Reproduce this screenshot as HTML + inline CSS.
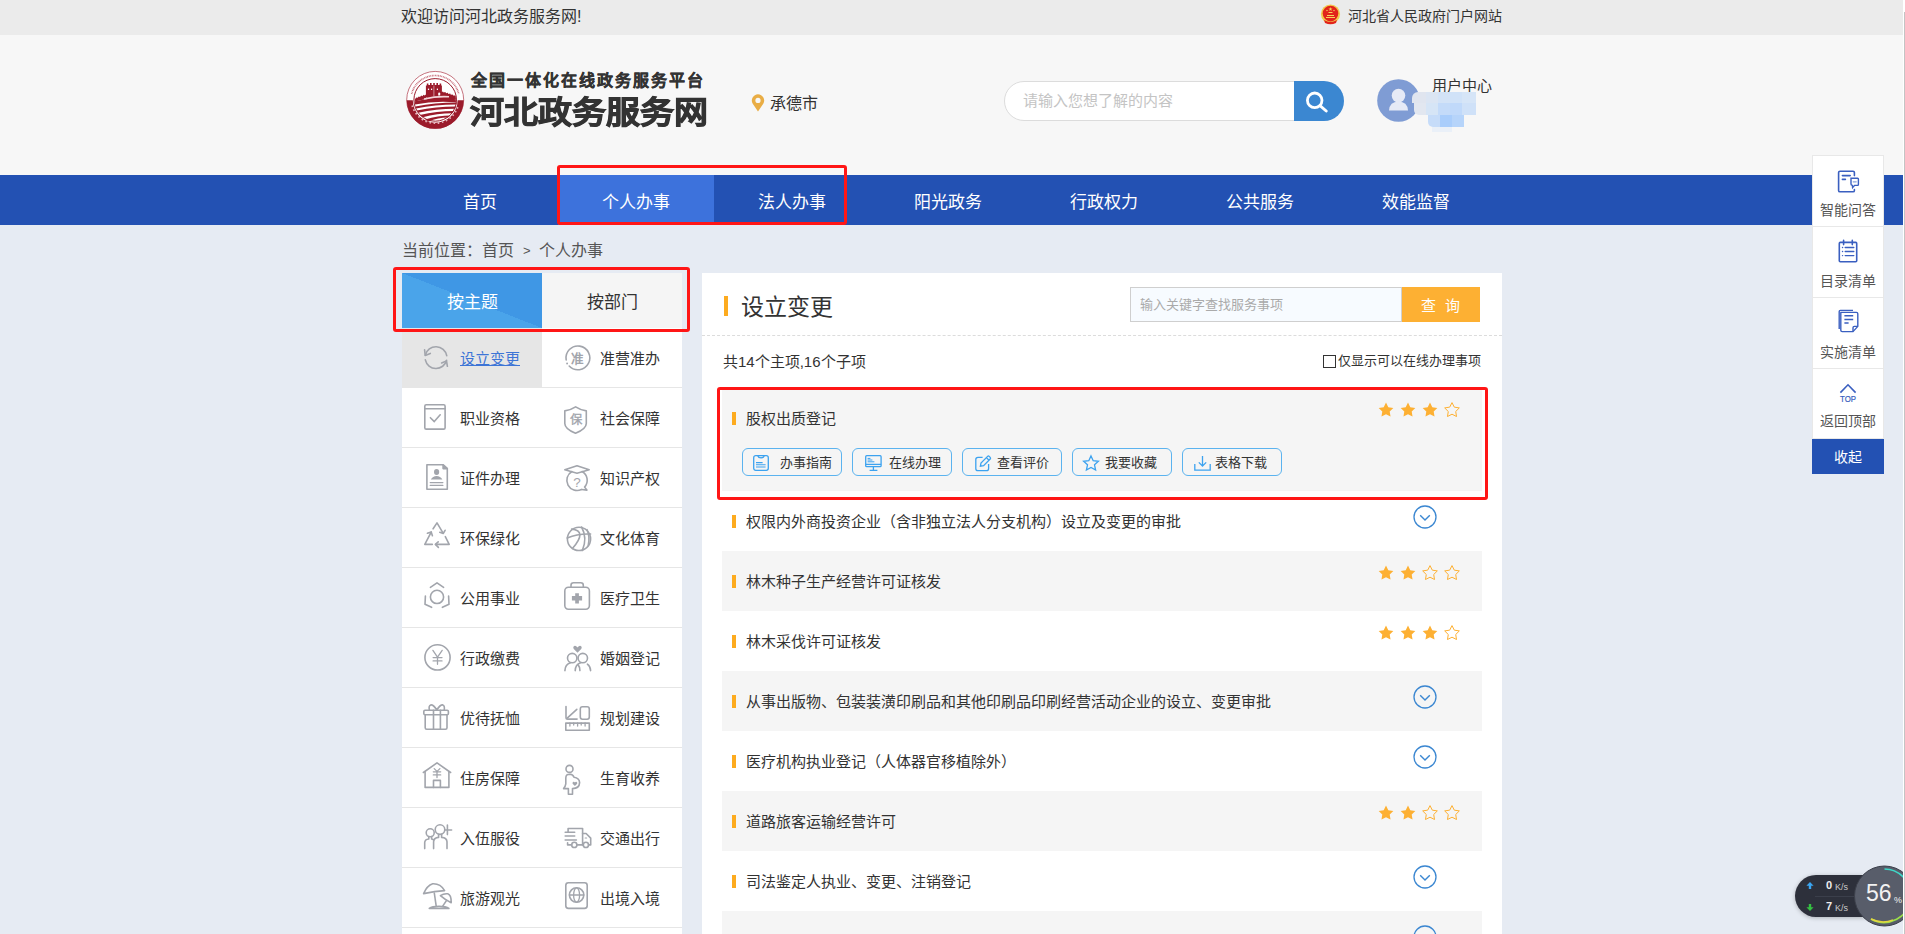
<!DOCTYPE html>
<html lang="zh-CN">
<head>
<meta charset="utf-8">
<style>
*{margin:0;padding:0;box-sizing:border-box}
html,body{width:1905px;height:934px;overflow:hidden}
body{position:relative;background:#e6ebf3;font-family:"Liberation Sans",sans-serif;color:#333}
.a{position:absolute;white-space:nowrap}
#topbar{left:0;top:0;width:1903px;height:35px;background:#ebebeb}
#header{left:0;top:35px;width:1903px;height:140px;background:#f7f7f7}
#nav{left:0;top:175px;width:1903px;height:50px;background:#2351b3}
.nv{top:0;height:50px;width:156px;text-align:center;color:#fff;font-size:17px;line-height:55px}
.redbox{border:3px solid #ff1616;border-radius:3px}
#sb{left:1903px;top:0;width:2px;height:934px;background:#fff}
#sb i{position:absolute;left:1px;top:12px;width:1px;height:922px;background:#c4c4c4}
.tab{width:140px;height:55px;line-height:60px;text-align:center;font-size:17px}
.mi{font-size:15px;line-height:61px;color:#333}
.mi.act{color:#3d75d6;text-decoration:underline;text-underline-offset:1px;text-decoration-thickness:1px}
.ic{fill:none;stroke:#a2a5ac;stroke-width:1.6;overflow:visible;stroke-linecap:round;stroke-linejoin:round}
.bi{fill:none;stroke:#3ca2ef;stroke-width:1.3;overflow:visible}
.li{font-size:15px;line-height:22px;color:#333}
.bt{font-size:13px;line-height:22px;color:#333}
.sd{left:1812px;width:72px;text-align:center;font-size:14px;line-height:22px;color:#555}
</style>
</head>
<body>
<div id="topbar" class="a"></div>
<div class="a" style="left:401px;top:0;font-size:16px;line-height:34px;color:#333">欢迎访问河北政务服务网!</div>
<div class="a" style="left:1348px;top:0;font-size:14px;line-height:33px;color:#333">河北省人民政府门户网站</div>

<div id="header" class="a"></div>
<div class="a" style="left:471px;top:71px;font-size:16px;line-height:20px;font-weight:bold;letter-spacing:2px;-webkit-text-stroke:0.3px #333;color:#333">全国一体化在线政务服务平台</div>
<div class="a" style="left:470px;top:92px;font-size:34px;line-height:40px;font-weight:900;color:#333;-webkit-text-stroke:1px #333;transform:scaleY(0.9);transform-origin:0 20px">河北政务服务网</div>
<div class="a" style="left:770px;top:93px;font-size:16px;line-height:22px;color:#333">承德市</div>

<div class="a" style="left:1004px;top:81px;width:300px;height:40px;border:1px solid #dcdcdc;border-radius:20px 0 0 20px;background:#fff"></div>
<div class="a" style="left:1023px;top:90px;font-size:15px;line-height:22px;color:#c4c4c4">请输入您想了解的内容</div>
<div class="a" style="left:1294px;top:81px;width:50px;height:40px;border-radius:0 20px 20px 0;background:#3b87d1"></div>

<div class="a" style="left:1432px;top:76px;font-size:15px;line-height:20px;color:#333">用户中心</div>


<!-- header icons -->
<svg class="a" style="left:1319px;top:3px" width="23" height="23" viewBox="0 0 23 23">
<circle cx="11.5" cy="11" r="9.6" fill="#f2c94c"/>
<circle cx="11.5" cy="10.6" r="7.8" fill="#e2231a"/>
<path d="M5 17 Q11.5 21 18 17 L17 20 Q11.5 22.5 6 20 Z" fill="#e2231a"/>
<path d="M7 14.5 H16 M8 12.5 H15 M9.5 9.5 H13.5" stroke="#f6d35b" stroke-width="1.2"/>
<path d="M11.5 4 L12 5.6 L13.6 5.6 L12.3 6.5 L12.8 8 L11.5 7.1 L10.2 8 L10.7 6.5 L9.4 5.6 L11 5.6 Z" fill="#f6d35b"/>
<circle cx="8" cy="7.5" r="0.7" fill="#f6d35b"/><circle cx="15" cy="7.5" r="0.7" fill="#f6d35b"/>
</svg>
<svg class="a" style="left:404px;top:70px" width="62" height="60" viewBox="0 0 62 60">
<circle cx="31.2" cy="29.9" r="28.5" fill="#fff" stroke="#b8505e" stroke-width="0.8"/>
<path d="M2.7 30.3 A28.5 28.5 0 0 0 59.7 30.3 L53.6 30.3 A22.4 22.4 0 0 1 8.8 30.3 Z" fill="#9b1b2b"/>
<circle cx="31.2" cy="29.9" r="21.3" fill="none" stroke="#9b1b2b" stroke-width="1"/>
<path d="M7.6 24 A24.3 24.3 0 0 1 54.8 24" fill="none" stroke="#c8707c" stroke-width="1.7" stroke-dasharray="0.9 0.7"/>
<path d="M8.2 35.5 A23.8 23.8 0 0 0 54.2 35.5" fill="none" stroke="#e6b4bb" stroke-width="1.8" stroke-dasharray="1.6 2.6"/>
<path d="M21.9 27.6 V15.6 H22.8 V13.4 H24.4 V15 H26 V13 H27.6 V15 H29.2 V12.9 H30.8 V15 H32.4 V13 H34 V15 H35.6 V13.4 H37.2 V15.6 H37.9 V22 L39 21.4 L39.6 22.6 L41.4 22 L42 23.2 L43.8 22.8 L44.4 24 L46.2 23.6 L46.8 24.8 L48.6 24.4 L49.2 25.6 L51.6 25.4 L52 29.6 Q40 28 31 30.4 Z" fill="#9b1b2b"/>
<path d="M22 24.4 L20.6 25.6 L19.6 24.8 L18.4 26.2 L17.2 25.6 L16 27 L14.8 26.4 L13.6 27.8 L12.4 27.4 L10.8 29.2 V31.6 L22 29 Z" fill="#9b1b2b"/>
<path d="M10.8 31.2 Q30 26.8 51.8 29.2 L52 32.2 Q30 30.4 11 34.6 Z" fill="#9b1b2b"/>
<path d="M20 29 Q33 26 45 26.8" fill="none" stroke="#f3d6da" stroke-width="1.6"/>
<rect x="23.9" y="18.6" width="1.2" height="1.4" fill="#fff"/><rect x="27" y="18.6" width="1.2" height="1.4" fill="#fff"/><rect x="32.8" y="18.6" width="1.2" height="1.4" fill="#fff"/>
<path d="M29.9 15.6 V26" stroke="#fff" stroke-width="0.5"/>
<path d="M34.2 25.6 V23.4 A1 1 0 0 1 36.2 23.4 V25.6 Z" fill="#fff"/>
<path d="M11.4 36.4 Q31 32.4 52.6 32.4 L52.4 34.4 Q31 34.4 12 38.4 Z" fill="#9b1b2b"/>
<path d="M12.8 40.6 Q32 36.6 51.8 36.6 L51.2 38.8 Q32 38.8 14.2 42.8 Z" fill="#9b1b2b"/>
<path d="M15.8 45 Q33 41 49.8 41 L48.4 43.2 Q33 43.2 18.8 47.2 Z" fill="#9b1b2b"/>
<path d="M21 49.4 Q34 45.4 46.6 45.4 L44 47.4 Q34 47.4 24.4 51.4 Z" fill="#9b1b2b"/>
</svg>
<svg class="a" style="left:750px;top:93px" width="16" height="20" viewBox="0 0 16 20">
<path d="M8 18.5 L2.6 10.6 A6.2 6.2 0 1 1 13.4 10.6 Z" fill="#e9ad45"/>
<circle cx="8" cy="7.4" r="2.6" fill="#f7f7f7"/>
</svg>
<svg class="a" style="left:1302px;top:89px" width="26" height="26" viewBox="0 0 26 26">
<circle cx="12.7" cy="11.3" r="7.3" fill="none" stroke="#fff" stroke-width="2.8"/>
<path d="M18 16.6 L24.2 22" stroke="#fff" stroke-width="2.9" stroke-linecap="round"/>
</svg>
<svg class="a" style="left:1377px;top:79px" width="43" height="43" viewBox="0 0 43 43">
<circle cx="21.5" cy="21.5" r="21.3" fill="#7f9cd4"/>
<circle cx="21.5" cy="16.6" r="6.8" fill="#e6eaf6"/>
<path d="M12 31.5 Q12.6 22.8 21.5 22.6 Q30.4 22.8 31 31.5 Z" fill="#e6eaf6"/>
</svg>
<div class="a" style="left:1410px;top:90px;width:70px;height:44px;filter:blur(0.7px)">
<div class="a" style="left:2px;top:2px;width:14px;height:11px;background:#e0e5ef;border-radius:6px 0 0 0"></div>
<div class="a" style="left:16px;top:2px;width:12px;height:11px;background:#dbe5f3"></div>
<div class="a" style="left:28px;top:2px;width:12px;height:11px;background:#d3e3f7"></div>
<div class="a" style="left:40px;top:2px;width:12px;height:11px;background:#d0e2f8"></div>
<div class="a" style="left:52px;top:2px;width:14px;height:11px;background:#d6e5f7"></div>
<div class="a" style="left:4px;top:13px;width:12px;height:12px;background:#e2e7f0;border-radius:0 0 0 5px"></div>
<div class="a" style="left:16px;top:13px;width:12px;height:12px;background:#d6e5f6"></div>
<div class="a" style="left:28px;top:13px;width:12px;height:12px;background:#c4dbf9"></div>
<div class="a" style="left:40px;top:13px;width:12px;height:12px;background:#c0d9fa"></div>
<div class="a" style="left:52px;top:13px;width:14px;height:12px;background:#cfe1f8"></div>
<div class="a" style="left:18px;top:25px;width:12px;height:12px;background:#c6dcf9;border-radius:0 0 0 5px"></div>
<div class="a" style="left:30px;top:25px;width:12px;height:12px;background:#a9cdfb"></div>
<div class="a" style="left:42px;top:25px;width:12px;height:12px;background:#b6d4fa"></div>
<div class="a" style="left:22px;top:37px;width:20px;height:5px;background:#eaf0f8"></div>
</div>
<div id="nav" class="a">
  <div class="a nv" style="left:402px">首页</div>
  <div class="a nv" style="left:558px;background:#3d72dc">个人办事</div>
  <div class="a nv" style="left:714px">法人办事</div>
  <div class="a nv" style="left:870px">阳光政务</div>
  <div class="a nv" style="left:1026px">行政权力</div>
  <div class="a nv" style="left:1182px">公共服务</div>
  <div class="a nv" style="left:1338px">效能监督</div>
</div>
<div class="a redbox" style="left:557px;top:165px;width:290px;height:60px"></div>

<div class="a" style="left:402px;top:240px;font-size:16px;line-height:22px;color:#555">当前位置：首页</div>
<div class="a" style="left:523px;top:240px;font-size:13px;line-height:22px;color:#555">&gt;</div>
<div class="a" style="left:539px;top:240px;font-size:16px;line-height:22px;color:#555">个人办事</div>


<!-- left panel -->
<div class="a" style="left:402px;top:273px;width:140px;height:55px;background:linear-gradient(to top right,#4aa4ea 50%,#3f97e5 50%)"></div>
<div class="a" style="left:542px;top:273px;width:140px;height:55px;background:#f5f5f5"></div>
<div class="a tab" style="left:402px;top:273px;color:#fff">按主题</div>
<div class="a tab" style="left:542px;top:273px;color:#333">按部门</div>
<div class="a" style="left:402px;top:328px;width:280px;height:606px;background:#fff"></div>
<div class="a" style="left:402px;top:328px;width:140px;height:59px;background:#e6e6e6"></div>
<div class="a" style="left:402px;top:387px;width:280px;height:1px;background:#e6e6e6"></div>
<div class="a" style="left:402px;top:447px;width:280px;height:1px;background:#e6e6e6"></div>
<div class="a" style="left:402px;top:507px;width:280px;height:1px;background:#e6e6e6"></div>
<div class="a" style="left:402px;top:567px;width:280px;height:1px;background:#e6e6e6"></div>
<div class="a" style="left:402px;top:627px;width:280px;height:1px;background:#e6e6e6"></div>
<div class="a" style="left:402px;top:687px;width:280px;height:1px;background:#e6e6e6"></div>
<div class="a" style="left:402px;top:747px;width:280px;height:1px;background:#e6e6e6"></div>
<div class="a" style="left:402px;top:807px;width:280px;height:1px;background:#e6e6e6"></div>
<div class="a" style="left:402px;top:867px;width:280px;height:1px;background:#e6e6e6"></div>
<div class="a" style="left:402px;top:927px;width:280px;height:1px;background:#e6e6e6"></div>
<div class="a mi act" style="left:460px;top:328px">设立变更</div>
<div class="a mi" style="left:600px;top:328px">准营准办</div>
<svg class="a ic" style="left:422px;top:344px" width="28" height="28" viewBox="-2 -2 28 28"><path d="M1.38 9.15 A10.90 10.90 0 0 1 22.73 9.71"/><path d="M0.6 3.8 L1.2 9.4 L6.3 7.4"/><path d="M22.58 14.24 A10.90 10.90 0 0 1 1.34 13.87"/><path d="M17.6 16.9 L22.5 15 L23.4 20.3"/></svg>
<svg class="a ic" style="left:563px;top:343px" width="30" height="30" viewBox="-2 -2 30 30"><path d="M1.18 14.97 A11.90 11.90 0 1 1 4.20 21.02"/><circle cx="2.1" cy="18.5" r="0.95" fill="#a2a5ac" stroke="none"/><text x="12.9" y="17.8" font-size="12.6" font-weight="bold" text-anchor="middle" fill="#a2a5ac" stroke="none">准</text></svg>
<div class="a mi" style="left:460px;top:388px">职业资格</div>
<div class="a mi" style="left:600px;top:388px">社会保障</div>
<svg class="a ic" style="left:422px;top:402px" width="26" height="30" viewBox="-2 -2 26 30"><rect x="0.8" y="0.8" width="20.3" height="24.3" rx="1.4"/><path d="M0.8 4.7 H21.1"/><path d="M6.4 13.7 L10.3 17.6 L16.2 10.8"/></svg>
<svg class="a ic" style="left:562px;top:404px" width="27" height="32" viewBox="-2 -2 27 32"><path d="M11.6 0.8 Q7 3.8 0.8 4.9 V17.4 Q0.8 22.8 11.5 27.2 Q22.3 22.8 22.3 17.4 V4.9 Q16.2 3.8 11.6 0.8 Z"/><text x="11.7" y="18.4" font-size="12.4" text-anchor="middle" fill="#a2a5ac" stroke="#a2a5ac" stroke-width="0.35">保</text></svg>
<div class="a mi" style="left:460px;top:448px">证件办理</div>
<div class="a mi" style="left:600px;top:448px">知识产权</div>
<svg class="a ic" style="left:424px;top:462px" width="26" height="30" viewBox="-2 -2 26 30"><path d="M0.9 0.8 H17.1 L21.3 4.6 V25.3 H0.9 Z"/><path d="M17.1 0.8 V4.6 H21.3 Z" fill="#a2a5ac"/><ellipse cx="10.6" cy="8" rx="2.6" ry="3" fill="#a2a5ac" stroke="none"/><path d="M4.8 15.6 Q6.8 12.2 10.6 12 Q14.4 12.2 16.4 15.6 Z" fill="#a2a5ac" stroke="none"/><path d="M4.2 18.6 H16.9 M4.2 21.4 H16.9" stroke-width="1.2"/></svg>
<svg class="a ic" style="left:562px;top:463px" width="30" height="31" viewBox="-2 -2 30 31"><path d="M0.8 4.8 L13 0.7 L25.2 4.8 L13 8.2 Z"/><path d="M18.10 6.47 A10.20 10.20 0 0 1 20.58 22.13 L22.9 25.1 L17.6 24.5"/><path d="M17.47 24.47 A10.20 10.20 0 0 1 7.90 6.47"/><text x="13.1" y="21.6" font-size="13.5" text-anchor="middle" fill="#a2a5ac" stroke="none">?</text></svg>
<div class="a mi" style="left:460px;top:508px">环保绿化</div>
<div class="a mi" style="left:600px;top:508px">文化体育</div>
<svg class="a ic" style="left:422px;top:520px" width="30" height="30" viewBox="-2 -2 30 30"><path d="M9.1 6.8 L13 0.9 L19.1 11.2"/><path d="M15.8 10.3 L19.2 11.5 L21.1 8.3"/><path d="M21.3 14.6 L25.2 22.4 H11.6"/><path d="M14.2 19.8 L11.4 22.4 L14.4 25.4"/><path d="M8.3 22.4 H0.8 L7.2 10.1"/><path d="M3.4 11.2 L7.2 9.9 L8.4 13.7"/></svg>
<svg class="a ic" style="left:564px;top:524px" width="30" height="30" viewBox="-2 -2 30 30"><circle cx="13" cy="12.9" r="11.6"/><path d="M1.2 12 Q12 7.4 24.6 8"/><path d="M5.6 3.1 Q21.8 4.6 6.4 22.6"/><path d="M15.6 1 Q21.6 12 16.4 24.4"/><path d="M21 3.6 Q24.2 10 22.2 19.6"/></svg>
<div class="a mi" style="left:460px;top:568px">公用事业</div>
<div class="a mi" style="left:600px;top:568px">医疗卫生</div>
<svg class="a ic" style="left:422px;top:580px" width="30" height="30" viewBox="-2 -2 30 30"><path d="M6.4 5.3 L13 0.8 L19.6 5.3"/><circle cx="13" cy="14.9" r="6.6"/><path d="M1.4 14.1 L1 22.2 L7.6 25.3"/><path d="M24.6 14.1 L25 22.2 L18.4 25.3"/></svg>
<svg class="a ic" style="left:562px;top:580px" width="30" height="32" viewBox="-2 -2 30 32"><rect x="0.8" y="5.3" width="24.6" height="21.9" rx="3.6"/><path d="M7 5.3 V3.3 Q7 0.8 9.5 0.8 H16.8 Q19.3 0.8 19.3 3.3 V5.3"/><path d="M11.2 11.2 H14.9 V14.1 H18.1 V18.6 H14.9 V21.6 H11.2 V18.6 H7.9 V14.1 H11.2 Z" fill="#a2a5ac" stroke="none"/></svg>
<div class="a mi" style="left:460px;top:628px">行政缴费</div>
<div class="a mi" style="left:600px;top:628px">婚姻登记</div>
<svg class="a ic" style="left:422px;top:642px" width="31" height="31" viewBox="-2 -2 31 31"><circle cx="13.5" cy="13.4" r="12.6"/><path d="M8.9 6.4 L13.5 13.2 L18.2 6.4 M13.5 13.2 V20.3 M9.1 13.6 H18 M9.1 16.9 H18" stroke-width="1.3"/></svg>
<svg class="a ic" style="left:562px;top:643px" width="31" height="30" viewBox="-2 -2 31 30"><path d="M13.5 7.8 L9.8 4 Q8.8 2.6 9.6 1.5 Q10.6 0.4 11.8 1 Q13 1.6 13.5 2.6 Q14 1.6 15.2 1 Q16.4 0.4 17.4 1.5 Q18.2 2.6 17.2 4 Z" fill="#a2a5ac" stroke="none"/><circle cx="8.2" cy="13.1" r="4.7"/><circle cx="18.8" cy="13.1" r="4.7"/><path d="M0.9 25.6 Q1.2 19.4 6.4 17.8"/><path d="M11.2 25.6 Q11.4 19.6 16.6 17.8"/><path d="M14 19.6 Q15.8 21.6 15.9 25.6"/><path d="M23.4 19.2 Q26.4 21.4 26.6 25.6"/></svg>
<div class="a mi" style="left:460px;top:688px">优待抚恤</div>
<div class="a mi" style="left:600px;top:688px">规划建设</div>
<svg class="a ic" style="left:421px;top:702px" width="30" height="30" viewBox="-2 -2 30 30"><rect x="0.8" y="6.2" width="24.6" height="4.6" rx="1.2"/><path d="M2.2 10.8 V23.8 Q2.2 25.3 3.7 25.3 H22.5 Q24 25.3 24 23.8 V10.8"/><path d="M10.5 6.2 V25.3 M17.4 6.2 V25.3"/><path d="M13.8 6 Q10.4 0.6 7.8 0.9 Q5.4 1.6 6.4 6.2 M13.8 6 Q17.2 0.6 19.8 0.9 Q22 1.6 21.2 6.2"/></svg>
<svg class="a ic" style="left:563px;top:704px" width="29" height="29" viewBox="-2 -2 29 29"><path d="M1 0.6 V11.4 Q1 13.1 2.7 13.1 H12.1"/><path d="M2.2 12.1 L11.8 3.4"/><rect x="15.3" y="0.7" width="9" height="12.5" rx="2.2"/><rect x="0.8" y="17.1" width="23.5" height="7.1"/><path d="M4.9 17 V20 M8.7 17 V19 M12.6 17 V20 M16.2 17 V19 M20.1 17 V20" stroke-width="1.3"/></svg>
<div class="a mi" style="left:460px;top:748px">住房保障</div>
<div class="a mi" style="left:600px;top:748px">生育收养</div>
<svg class="a ic" style="left:421px;top:760px" width="32" height="30" viewBox="-2 -2 32 30"><path d="M0.4 10.5 L14 0.8 L27.6 10.5"/><path d="M2.1 9.6 V25.4 H25.9 V9.6"/><path d="M10.5 25.4 V18.4 H17.4 V25.4"/><path d="M11.2 6.6 L14 9.4 L16.9 6.6 M14 9.4 V15.6 M10.3 9.8 H17.7 M10.3 12.9 H17.7" stroke-width="1.3"/></svg>
<svg class="a ic" style="left:561px;top:763px" width="22" height="34" viewBox="-2 -2 22 34"><circle cx="6.5" cy="3.9" r="3.5"/><path d="M4 9.8 Q2.8 10.6 2.8 13 V18.8 Q2.4 21.4 0.6 23.6 H5.4 V29.2 H9.5 V23.6 Q16.4 23.4 16.6 17.6 Q16.4 12.8 11 12.2 Q10 9.4 7.2 9.2 Q5.2 9.2 4 9.8 Z"/><path d="M11.9 21 L9.6 18.7 Q9.2 17.2 10.4 16.8 Q11.4 16.6 11.9 17.6 Q12.4 16.6 13.4 16.8 Q14.6 17.2 14.2 18.7 Z" fill="#a2a5ac" stroke="none"/></svg>
<div class="a mi" style="left:460px;top:808px">入伍服役</div>
<div class="a mi" style="left:600px;top:808px">交通出行</div>
<svg class="a ic" style="left:422px;top:822px" width="32" height="29" viewBox="-2 -2 32 29"><circle cx="6.2" cy="8.8" r="4"/><path d="M0.7 24.6 V18.6 Q0.8 15.4 4.8 15 V12.6 M7.6 12.6 V15 Q8.4 15.2 9.4 15.8"/><circle cx="16" cy="5.6" r="4.8"/><path d="M9.6 24.6 V17.8 Q9.8 13.8 14.6 13.4 V10.4 M17.6 10.4 V13.4 Q22.8 13.8 23 17.8 V24.6"/><path d="M23.4 1.1 V10.6 M21 6 H27.6"/></svg>
<svg class="a ic" style="left:563px;top:825px" width="30" height="25" viewBox="-2 -2 30 25"><path d="M3.1 5 V1.5 H17.6 V17.9"/><path d="M0.2 5.3 H9.7 M0.2 9 H9.7 M0.2 13 H11.4"/><path d="M17.6 6.5 H21.1 L25.7 11.1 V17.9 H23.6"/><path d="M2.6 15.8 V17.9 H6.6 M11.9 17.9 H18.3"/><circle cx="9.3" cy="17.9" r="2.6"/><circle cx="20.9" cy="17.9" r="2.6"/><path d="M20.2 11 H21.6" stroke-width="1.2"/></svg>
<div class="a mi" style="left:460px;top:868px">旅游观光</div>
<div class="a mi" style="left:600px;top:868px">出境入境</div>
<svg class="a ic" style="left:421px;top:881px" width="33" height="30" viewBox="-2 -2 33 30"><path d="M0.6 10.6 Q4 2.6 9.7 0.8 Q17.4 0.4 21.6 7.6 Q12 8.2 0.6 10.6 Z"/><path d="M11.3 10 L13.2 23.1"/><path d="M17.4 12.7 Q21 10.2 24.8 10.8 Q28.4 12 28.2 19.7 Q22 16.8 17.4 12.7 Z"/><path d="M23.6 17.4 L19.7 23.1"/><path d="M6.3 25.4 Q9 23.2 16 23.2 Q23 23.2 25.9 25.4 Z"/></svg>
<svg class="a ic" style="left:563px;top:880px" width="27" height="31" viewBox="-2 -2 27 31"><rect x="0.8" y="0.8" width="21.4" height="25.6" rx="2.6"/><circle cx="11.6" cy="13" r="7.2"/><path d="M4.4 13 H18.8" stroke-width="1.3"/><ellipse cx="11.6" cy="13" rx="3" ry="7.2" stroke-width="1.3"/></svg>
<div class="a redbox" style="left:393px;top:267px;width:297px;height:65px"></div>

<!-- content -->
<div class="a" style="left:702px;top:273px;width:800px;height:661px;background:#fff"></div>
<div class="a" style="left:724px;top:296px;width:4px;height:20px;background:#fdab1f"></div>
<div class="a" style="left:741px;top:290px;font-size:23px;line-height:34px;color:#333">设立变更</div>
<div class="a" style="left:1130px;top:287px;width:272px;height:35px;border:1px solid #cfcfcf;background:#f7fbff"></div>
<div class="a" style="left:1140px;top:294px;font-size:13px;line-height:22px;color:#aaa">输入关键字查找服务事项</div>
<div class="a" style="left:1402px;top:287px;width:78px;height:35px;background:#fdb033"></div>
<div class="a" style="left:1421px;top:295px;font-size:15px;line-height:22px;color:#fff;letter-spacing:9px">查询</div>
<div class="a" style="left:702px;top:335px;width:800px;height:0;border-top:1px dashed #dcdcdc"></div>
<div class="a" style="left:723px;top:351px;font-size:15px;line-height:22px;color:#333">共14个主项,16个子项</div>
<div class="a" style="left:1323px;top:355px;width:13px;height:13px;border:1px solid #333;background:#fff"></div>
<div class="a" style="left:1338px;top:350px;font-size:13px;line-height:22px;color:#333">仅显示可以在线办理事项</div>
<div class="a" style="left:722px;top:388px;width:760px;height:103px;background:#f5f5f5"></div>
<div class="a" style="left:732px;top:412px;width:4px;height:13px;background:#fdab1f"></div>
<div class="a li" style="left:746px;top:408px">股权出质登记</div>
<svg class="a" style="left:1378px;top:402px" width="16" height="16" viewBox="0 0 16 16"><polygon points="8.00,0.60 10.29,5.14 15.32,5.92 11.71,9.51 12.53,14.53 8.00,12.20 3.47,14.53 4.29,9.51 0.68,5.92 5.71,5.14" fill="#fdb033"/></svg>
<svg class="a" style="left:1400px;top:402px" width="16" height="16" viewBox="0 0 16 16"><polygon points="8.00,0.60 10.29,5.14 15.32,5.92 11.71,9.51 12.53,14.53 8.00,12.20 3.47,14.53 4.29,9.51 0.68,5.92 5.71,5.14" fill="#fdb033"/></svg>
<svg class="a" style="left:1422px;top:402px" width="16" height="16" viewBox="0 0 16 16"><polygon points="8.00,0.60 10.29,5.14 15.32,5.92 11.71,9.51 12.53,14.53 8.00,12.20 3.47,14.53 4.29,9.51 0.68,5.92 5.71,5.14" fill="#fdb033"/></svg>
<svg class="a" style="left:1444px;top:402px" width="16" height="16" viewBox="0 0 16 16"><polygon points="8.00,0.60 10.29,5.14 15.32,5.92 11.71,9.51 12.53,14.53 8.00,12.20 3.47,14.53 4.29,9.51 0.68,5.92 5.71,5.14" fill="none" stroke="#fdb033" stroke-width="1"/></svg>
<div class="a" style="left:722px;top:491px;width:760px;height:60px;background:#fff"></div>
<div class="a" style="left:732px;top:515px;width:4px;height:13px;background:#fdab1f"></div>
<div class="a li" style="left:746px;top:511px">权限内外商投资企业（含非独立法人分支机构）设立及变更的审批</div>
<svg class="a" style="left:1412px;top:504px" width="26" height="26" viewBox="0 0 26 26"><circle cx="13" cy="13" r="11" fill="none" stroke="#3b87d1" stroke-width="1.3"/><path d="M8.2 11.2 L13 16 L17.8 11.2" fill="none" stroke="#3b87d1" stroke-width="1.4"/></svg>
<div class="a" style="left:722px;top:551px;width:760px;height:60px;background:#f5f5f5"></div>
<div class="a" style="left:732px;top:575px;width:4px;height:13px;background:#fdab1f"></div>
<div class="a li" style="left:746px;top:571px">林木种子生产经营许可证核发</div>
<svg class="a" style="left:1378px;top:565px" width="16" height="16" viewBox="0 0 16 16"><polygon points="8.00,0.60 10.29,5.14 15.32,5.92 11.71,9.51 12.53,14.53 8.00,12.20 3.47,14.53 4.29,9.51 0.68,5.92 5.71,5.14" fill="#fdb033"/></svg>
<svg class="a" style="left:1400px;top:565px" width="16" height="16" viewBox="0 0 16 16"><polygon points="8.00,0.60 10.29,5.14 15.32,5.92 11.71,9.51 12.53,14.53 8.00,12.20 3.47,14.53 4.29,9.51 0.68,5.92 5.71,5.14" fill="#fdb033"/></svg>
<svg class="a" style="left:1422px;top:565px" width="16" height="16" viewBox="0 0 16 16"><polygon points="8.00,0.60 10.29,5.14 15.32,5.92 11.71,9.51 12.53,14.53 8.00,12.20 3.47,14.53 4.29,9.51 0.68,5.92 5.71,5.14" fill="none" stroke="#fdb033" stroke-width="1"/></svg>
<svg class="a" style="left:1444px;top:565px" width="16" height="16" viewBox="0 0 16 16"><polygon points="8.00,0.60 10.29,5.14 15.32,5.92 11.71,9.51 12.53,14.53 8.00,12.20 3.47,14.53 4.29,9.51 0.68,5.92 5.71,5.14" fill="none" stroke="#fdb033" stroke-width="1"/></svg>
<div class="a" style="left:722px;top:611px;width:760px;height:60px;background:#fff"></div>
<div class="a" style="left:732px;top:635px;width:4px;height:13px;background:#fdab1f"></div>
<div class="a li" style="left:746px;top:631px">林木采伐许可证核发</div>
<svg class="a" style="left:1378px;top:625px" width="16" height="16" viewBox="0 0 16 16"><polygon points="8.00,0.60 10.29,5.14 15.32,5.92 11.71,9.51 12.53,14.53 8.00,12.20 3.47,14.53 4.29,9.51 0.68,5.92 5.71,5.14" fill="#fdb033"/></svg>
<svg class="a" style="left:1400px;top:625px" width="16" height="16" viewBox="0 0 16 16"><polygon points="8.00,0.60 10.29,5.14 15.32,5.92 11.71,9.51 12.53,14.53 8.00,12.20 3.47,14.53 4.29,9.51 0.68,5.92 5.71,5.14" fill="#fdb033"/></svg>
<svg class="a" style="left:1422px;top:625px" width="16" height="16" viewBox="0 0 16 16"><polygon points="8.00,0.60 10.29,5.14 15.32,5.92 11.71,9.51 12.53,14.53 8.00,12.20 3.47,14.53 4.29,9.51 0.68,5.92 5.71,5.14" fill="#fdb033"/></svg>
<svg class="a" style="left:1444px;top:625px" width="16" height="16" viewBox="0 0 16 16"><polygon points="8.00,0.60 10.29,5.14 15.32,5.92 11.71,9.51 12.53,14.53 8.00,12.20 3.47,14.53 4.29,9.51 0.68,5.92 5.71,5.14" fill="none" stroke="#fdb033" stroke-width="1"/></svg>
<div class="a" style="left:722px;top:671px;width:760px;height:60px;background:#f5f5f5"></div>
<div class="a" style="left:732px;top:695px;width:4px;height:13px;background:#fdab1f"></div>
<div class="a li" style="left:746px;top:691px">从事出版物、包装装潢印刷品和其他印刷品印刷经营活动企业的设立、变更审批</div>
<svg class="a" style="left:1412px;top:684px" width="26" height="26" viewBox="0 0 26 26"><circle cx="13" cy="13" r="11" fill="none" stroke="#3b87d1" stroke-width="1.3"/><path d="M8.2 11.2 L13 16 L17.8 11.2" fill="none" stroke="#3b87d1" stroke-width="1.4"/></svg>
<div class="a" style="left:722px;top:731px;width:760px;height:60px;background:#fff"></div>
<div class="a" style="left:732px;top:755px;width:4px;height:13px;background:#fdab1f"></div>
<div class="a li" style="left:746px;top:751px">医疗机构执业登记（人体器官移植除外）</div>
<svg class="a" style="left:1412px;top:744px" width="26" height="26" viewBox="0 0 26 26"><circle cx="13" cy="13" r="11" fill="none" stroke="#3b87d1" stroke-width="1.3"/><path d="M8.2 11.2 L13 16 L17.8 11.2" fill="none" stroke="#3b87d1" stroke-width="1.4"/></svg>
<div class="a" style="left:722px;top:791px;width:760px;height:60px;background:#f5f5f5"></div>
<div class="a" style="left:732px;top:815px;width:4px;height:13px;background:#fdab1f"></div>
<div class="a li" style="left:746px;top:811px">道路旅客运输经营许可</div>
<svg class="a" style="left:1378px;top:805px" width="16" height="16" viewBox="0 0 16 16"><polygon points="8.00,0.60 10.29,5.14 15.32,5.92 11.71,9.51 12.53,14.53 8.00,12.20 3.47,14.53 4.29,9.51 0.68,5.92 5.71,5.14" fill="#fdb033"/></svg>
<svg class="a" style="left:1400px;top:805px" width="16" height="16" viewBox="0 0 16 16"><polygon points="8.00,0.60 10.29,5.14 15.32,5.92 11.71,9.51 12.53,14.53 8.00,12.20 3.47,14.53 4.29,9.51 0.68,5.92 5.71,5.14" fill="#fdb033"/></svg>
<svg class="a" style="left:1422px;top:805px" width="16" height="16" viewBox="0 0 16 16"><polygon points="8.00,0.60 10.29,5.14 15.32,5.92 11.71,9.51 12.53,14.53 8.00,12.20 3.47,14.53 4.29,9.51 0.68,5.92 5.71,5.14" fill="none" stroke="#fdb033" stroke-width="1"/></svg>
<svg class="a" style="left:1444px;top:805px" width="16" height="16" viewBox="0 0 16 16"><polygon points="8.00,0.60 10.29,5.14 15.32,5.92 11.71,9.51 12.53,14.53 8.00,12.20 3.47,14.53 4.29,9.51 0.68,5.92 5.71,5.14" fill="none" stroke="#fdb033" stroke-width="1"/></svg>
<div class="a" style="left:722px;top:851px;width:760px;height:60px;background:#fff"></div>
<div class="a" style="left:732px;top:875px;width:4px;height:13px;background:#fdab1f"></div>
<div class="a li" style="left:746px;top:871px">司法鉴定人执业、变更、注销登记</div>
<svg class="a" style="left:1412px;top:864px" width="26" height="26" viewBox="0 0 26 26"><circle cx="13" cy="13" r="11" fill="none" stroke="#3b87d1" stroke-width="1.3"/><path d="M8.2 11.2 L13 16 L17.8 11.2" fill="none" stroke="#3b87d1" stroke-width="1.4"/></svg>
<div class="a" style="left:722px;top:911px;width:760px;height:60px;background:#f5f5f5"></div>
<svg class="a" style="left:1412px;top:924px" width="26" height="26" viewBox="0 0 26 26"><circle cx="13" cy="13" r="11" fill="none" stroke="#3b87d1" stroke-width="1.3"/><path d="M8.2 11.2 L13 16 L17.8 11.2" fill="none" stroke="#3b87d1" stroke-width="1.4"/></svg>
<div class="a" style="left:742px;top:448px;width:100px;height:28px;border:1px solid #5bb3ef;border-radius:6px"></div>
<svg class="a bi" style="left:751px;top:453px" width="20" height="20" viewBox="-2 -2 20 20"><rect x="0.7" y="0.7" width="14.6" height="14.6" rx="2"/><path d="M4.8 0.7 Q5.4 2.8 8 2.8 Q10.6 2.8 11.2 0.7"/><path d="M3 7.6 H9.6 M3 9.8 H12.6 M3 12 H12.6" stroke-width="1.1"/></svg>
<div class="a bt" style="left:780px;top:452px">办事指南</div>
<div class="a" style="left:852px;top:448px;width:100px;height:28px;border:1px solid #5bb3ef;border-radius:6px"></div>
<svg class="a bi" style="left:863px;top:453px" width="20" height="20" viewBox="-2 -2 20 20"><rect x="0.7" y="0.7" width="15.4" height="11" rx="1"/><path d="M0.7 9.4 H16.1"/><path d="M2.6 3.4 H5.4 M2.6 5 H7.4 M2.6 6.8 H9.4" stroke-width="1"/><path d="M8.4 11.7 V15.2 M4.6 15.4 H12.4"/></svg>
<div class="a bt" style="left:889px;top:452px">在线办理</div>
<div class="a" style="left:962px;top:448px;width:100px;height:28px;border:1px solid #5bb3ef;border-radius:6px"></div>
<svg class="a bi" style="left:973px;top:453px" width="20" height="20" viewBox="-2 -2 20 20"><path d="M7.6 2.4 H3 Q0.8 2.4 0.8 4.6 V13.4 Q0.8 15.6 3 15.6 H11.4 Q13.6 15.6 13.6 13.4 V9"/><path d="M5.4 11.2 L6 8 L12.6 1.4 Q13.4 0.6 14.2 1.4 L15.2 2.4 Q16 3.2 15.2 4 L8.6 10.6 Z"/><path d="M11.4 2.6 L14 5.2"/></svg>
<div class="a bt" style="left:997px;top:452px">查看评价</div>
<div class="a" style="left:1072px;top:448px;width:100px;height:28px;border:1px solid #5bb3ef;border-radius:6px"></div>
<svg class="a bi" style="left:1081px;top:453px" width="20" height="20" viewBox="-2 -2 20 20"><path d="M8 0.9 L10.2 5.7 L15.4 6.3 L11.5 9.8 L12.6 15 L8 12.4 L3.4 15 L4.5 9.8 L0.6 6.3 L5.8 5.7 Z"/></svg>
<div class="a bt" style="left:1105px;top:452px">我要收藏</div>
<div class="a" style="left:1182px;top:448px;width:100px;height:28px;border:1px solid #5bb3ef;border-radius:6px"></div>
<svg class="a bi" style="left:1192px;top:453px" width="20" height="20" viewBox="-2 -2 20 20"><path d="M0.8 9 V15.1 H16.2 V9"/><path d="M8.5 0.9 V11 M4.8 7.4 L8.5 11 L12.2 7.4"/></svg>
<div class="a bt" style="left:1215px;top:452px">表格下载</div>
<div class="a redbox" style="left:717px;top:387px;width:771px;height:113px"></div>

<!-- sidebar -->
<div class="a" style="left:1812px;top:155px;width:72px;height:284px;background:#fff;border:1px solid #e8e8e8"></div>
<div class="a" style="left:1812px;top:226px;width:72px;height:1px;background:#e8e8e8"></div>
<div class="a" style="left:1812px;top:297px;width:72px;height:1px;background:#e8e8e8"></div>
<div class="a" style="left:1812px;top:368px;width:72px;height:1px;background:#e8e8e8"></div>
<div class="a sd" style="top:199px">智能问答</div>
<div class="a sd" style="top:270px">目录清单</div>
<div class="a sd" style="top:341px">实施清单</div>
<div class="a sd" style="top:410px">返回顶部</div>
<div class="a" style="left:1812px;top:439px;width:72px;height:35px;background:#2351b3"></div>
<div class="a sd" style="top:446px;color:#fff">收起</div>

<svg class="a" style="left:1836px;top:169px" width="26" height="26" viewBox="0 0 26 26" fill="none" stroke="#3a5fc0" stroke-width="1.6" stroke-linecap="round">
<path d="M18.4 6.6 V3.6 Q18.4 2.2 17 2.2 H4 Q2.6 2.2 2.6 3.6 V21.4 Q2.6 22.8 4 22.8 H17 Q18.4 22.8 18.4 21.4 V20.6"/>
<path d="M6.4 6.6 H14.2 M6.4 10.4 H9.4"/>
<path d="M15 9.2 H21.6 Q22.4 9.2 22.4 10 V15.6 Q22.4 16.4 21.6 16.4 H18.6 L16.6 18.6 L16.4 16.4 Q15 16.4 15 15 Z" stroke-width="1.4"/>
<path d="M17.2 12.8 H20.2" stroke-width="1.2" stroke="#8aa3dc"/>
</svg>
<svg class="a" style="left:1837px;top:238px" width="22" height="26" viewBox="0 0 22 26" fill="none" stroke="#3a5fc0" stroke-width="1.6" stroke-linecap="round">
<rect x="2.3" y="4.4" width="17.4" height="19.3" rx="1"/>
<path d="M6.6 2.4 V6.6 M15.3 2.4 V6.6"/>
<path d="M5.5 9.5 H5.6 M5.5 13.5 H5.6 M5.5 17.6 H5.6 M8.2 9.5 H16.8 M8.2 13.5 H16.8 M8.2 17.6 H16.8" stroke-width="1.4"/>
</svg>
<svg class="a" style="left:1836px;top:308px" width="24" height="26" viewBox="0 0 24 26" fill="none" stroke="#3a5fc0" stroke-width="1.4" stroke-linejoin="round">
<path d="M3.2 21 V3.6 Q3.2 2.4 4.4 2.4 H17"/>
<path d="M4.8 4.4 H20.4 Q21.8 4.4 21.8 5.8 V18.4 L17 23.6 H6.2 Q4.8 23.6 4.8 22.2 Z" fill="#fff"/>
<path d="M21.8 18.4 H18.4 Q17 18.4 17 19.8 V23.6"/>
<path d="M8.4 7.8 H17.2 M8.4 11.4 H17.2 M8.4 15 H12.6" stroke-width="1.5"/>
</svg>
<svg class="a" style="left:1838px;top:382px" width="20" height="22" viewBox="0 0 20 22" fill="none" stroke="#3a5fc0" stroke-width="1.6">
<path d="M2.4 10.6 L10 2.8 L17.6 10.6"/>
<text x="2" y="20" font-size="8.4" textLength="16" lengthAdjust="spacingAndGlyphs" fill="#3a5fc0" stroke="#3a5fc0" stroke-width="0.2" font-family="Liberation Sans">TOP</text>
</svg>
<!-- net widget -->
<div class="a" style="left:1795px;top:875px;width:110px;height:42px;border-radius:21px;background:#2d303b;box-shadow:0 1px 4px rgba(0,0,0,.25)"></div>
<div class="a" style="left:1815px;top:896px;width:42px;height:1px;background:#3b3f4b"></div>
<svg class="a" style="left:1804px;top:880px" width="12" height="34" viewBox="0 0 12 34">
<path d="M6 2 L2.4 5.8 H4.8 V9 H7.2 V5.8 H9.6 Z" fill="#3aa6f2"/>
<path d="M6 31 L2.4 27.2 H4.8 V24 H7.2 V27.2 H9.6 Z" fill="#35c042"/>
</svg>
<div class="a" style="left:1826px;top:879px;font-size:11px;line-height:12px;color:#eee;font-weight:bold">0</div>
<div class="a" style="left:1835px;top:881px;font-size:9px;line-height:12px;color:#ccc">K/s</div>
<div class="a" style="left:1826px;top:900px;font-size:11px;line-height:12px;color:#eee;font-weight:bold">7</div>
<div class="a" style="left:1835px;top:902px;font-size:9px;line-height:12px;color:#ccc">K/s</div>
<svg class="a" style="left:1853px;top:864px" width="52" height="64" viewBox="0 0 52 64">
<circle cx="31.5" cy="32" r="30" fill="#585d6a" stroke="#3c404b" stroke-width="1"/>
<path d="M31.5 5 A27 27 0 0 1 58 30" fill="none" stroke="#3fd8c8" stroke-width="1.6"/>
<path d="M58 34 A27 27 0 0 1 18 55" fill="none" stroke="#9be04a" stroke-width="1.6"/>
<path d="M40 56 A27 27 0 0 1 18 55" fill="none" stroke="#e3d640" stroke-width="1.6"/>
</svg>
<div class="a" style="left:1866px;top:880px;font-size:23px;line-height:26px;color:#f2f2f2">56</div>
<div class="a" style="left:1894px;top:894px;font-size:9px;line-height:12px;color:#f2f2f2">%</div>
<div id="sb" class="a"><i></i></div>
</body>
</html>
